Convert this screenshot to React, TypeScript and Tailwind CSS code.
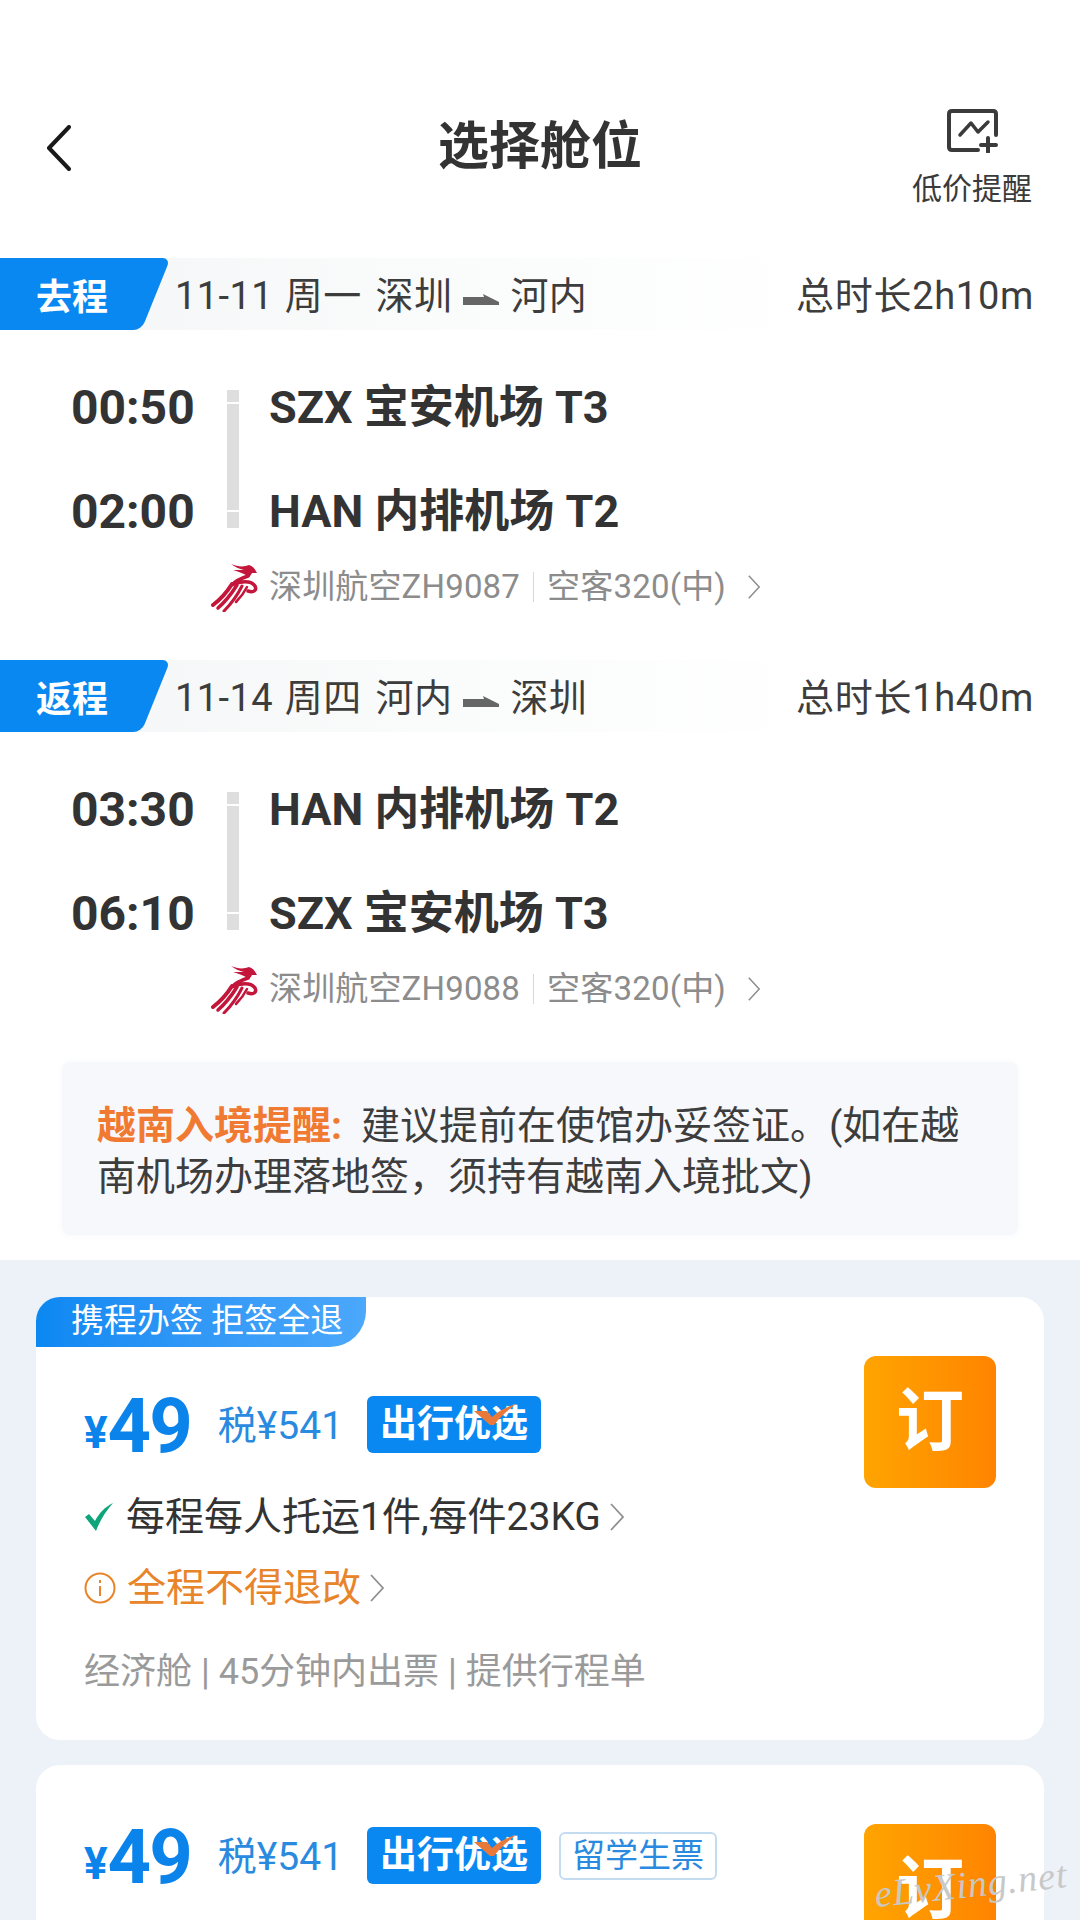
import React from 'react';

const FONT = 'font-["Roboto","Noto_Sans_CJK_SC",sans-serif]';

const ShenzhenLogo = () => (
  <svg viewBox="0 0 50 50" className="w-[50px] h-[50px] shrink-0" fill="none" stroke="#c4163a" strokeLinecap="round">
    <path d="M20 2 C27 5 33 5 38 3 C42 4 44 7 46 11 L41 11 C40 13 39 14 38 15 C32 11 26 9 22 8 C26 8 30 8 33 8 C28 7 24 5 20 2Z" fill="#c4163a" stroke="none" />
    <path d="M37 14 C31 16 25 18 21 23 C29 19 40 18 44 24 C46 28 43 31 37 29" strokeWidth="3.5" />
    <path d="M21 22 C16 30 10 37 2 43" strokeWidth="4" />
    <path d="M26 23 C21 31 15 39 7 46" strokeWidth="3.5" />
    <path d="M31 24 C27 32 21 41 13 49" strokeWidth="3" />
    <path d="M36 25 C33 31 29 36 25 40" strokeWidth="2.5" />
  </svg>
);

const RouteArrow = () => (
  <svg viewBox="0 0 36 11" className="w-[36px] h-[11px] mx-[11px] mt-[6px]" fill="#666">
    <path d="M0 3 H21 L20 0 L36 8 V11 H0 Z" />
  </svg>
);

const AlertIcon = () => (
  <svg viewBox="0 0 51 44" className="w-[51px] h-[44px]" fill="none" stroke="#3a3a3a" strokeWidth="4" strokeLinecap="round" strokeLinejoin="round">
    <path d="M31 41 H5 Q2 41 2 38 V5 Q2 2 5 2 H46 Q49 2 49 5 V26" />
    <path d="M13 26 L24 14 L31 23 L41 13" strokeWidth="3.5" />
    <path d="M41 29 V43 M34 36 H49" />
  </svg>
);

const ThinChevron = ({ className }: { className: string }) => (
  <svg viewBox="0 0 16 30" className={className} fill="none" stroke="#8f8f8f" strokeWidth="1.8">
    <path d="M2 2 L14 15 L2 28" />
  </svg>
);

function SegmentHeader({ tag, date, from, to, total }: { tag: string; date: string; from: string; to: string; total: string }) {
  return (
    <div className="flex items-center h-[72px] bg-gradient-to-r from-[#f4f6f7] via-[#fafbfb] via-40% to-white to-75%">
      <div className="relative h-full w-[174px] overflow-hidden shrink-0">
        <div className="absolute -left-[30px] top-0 h-full w-[186px] bg-[#0a88f2] rounded-[8px] -skew-x-[22deg]" />
        <span className="relative block pl-[36px] leading-[80px] text-[36px] font-bold text-white">{tag}</span>
      </div>
      <div className="flex items-center text-[38px] leading-[50px] mt-[4px] text-[#3d3d3d] ml-[1px] tracking-[0.4px]">
        <span className="[word-spacing:2px]">{date}</span>
        <span className="ml-[14px]">{from}</span>
        <RouteArrow />
        <span>{to}</span>
      </div>
      <span className="ml-auto pr-[46px] mt-[4px] text-[38px] leading-[50px] text-[#3d3d3d] tracking-[0.7px]">{total}</span>
    </div>
  );
}

function FlightInfo({ depTime, depPlace, arrTime, arrPlace, flightNo }: { depTime: string; depPlace: string; arrTime: string; arrPlace: string; flightNo: string }) {
  return (
    <div className="pt-[60px] h-[330px]">
      <div className="flex">
        <div className="w-[227px] pl-[71px] -mt-[11px] flex flex-col gap-[47px] text-[48px] leading-[57px] font-bold text-[#333]">
          <span>{depTime}</span>
          <span>{arrTime}</span>
        </div>
        <div className="w-[12px] h-[138px] flex flex-col">
          <div className="h-[12px] bg-[#dedede]" />
          <div className="h-[2px]" />
          <div className="h-[106px] bg-[#dedede]" />
          <div className="h-[2px]" />
          <div className="h-[16px] bg-[#dedede]" />
        </div>
        <div className="pl-[30px] -mt-[11px] flex flex-col gap-[47px] text-[45px] leading-[57px] font-bold text-[#333]">
          <span>{depPlace}</span>
          <span>{arrPlace}</span>
        </div>
      </div>
      <div className="flex items-center pl-[211px] mt-[22px] h-[50px] text-[33px] text-[#8c8c8c]">
        <ShenzhenLogo />
        <span className="ml-[8px] tracking-[0.15px]">{flightNo}</span>
        <span className="mx-[13px] h-[30px] w-[1px] bg-[#d8d8d8]" />
        <span className="tracking-[0.2px]">空客320(中)</span>
        <ThinChevron className="ml-[20px] w-[16px] h-[26px]" />
      </div>
    </div>
  );
}

function PriceRow({ student }: { student?: boolean }) {
  return (
    <div className="flex items-center">
      <span className="text-[44px] font-bold text-[#0a84ea] leading-none mt-[14px]">¥</span>
      <span className="text-[76px] font-bold text-[#0a84ea] leading-[80px] tracking-[-2px]">49</span>
      <span className="ml-[27px] text-[39px] text-[#2a8ae0]">税¥541</span>
      <div className="relative ml-[24px] mb-[3px] w-[174px] h-[57px] rounded-[6px] bg-[#0a88f2] flex items-center justify-center text-[37px] font-bold text-white">
        出行优选
        <svg viewBox="0 0 44 24" className="absolute left-[107px] top-[7px] w-[44px] h-[24px]">
          <path d="M0 8 L13 8 L18 14 C24 8 34 3 42 1 C34 7 27 13 20 22 L16 22 Z" fill="#e8793a" />
        </svg>
      </div>
      {student && (
        <div className="ml-[18px] mb-[3px] w-[158px] h-[48px] rounded-[6px] border-2 border-[#c4dcf2] flex items-center justify-center text-[33px] text-[#2a8ae0]">
          留学生票
        </div>
      )}
    </div>
  );
}

function BookButton() {
  return (
    <div className="w-[132px] h-[132px] shrink-0 rounded-[12px] bg-gradient-to-r from-[#ffa400] to-[#ff8400] flex items-center justify-center text-[68px] font-bold text-white">
      订
    </div>
  );
}

export default function App() {
  return (
    <div className={`${FONT} relative w-[1080px] h-[1920px] overflow-hidden bg-white`}>
      {/* header */}
      <div className="grid grid-cols-[1fr_auto_1fr] h-[258px]">
        <div className="pl-[46px] pt-[125px]">
          <svg viewBox="0 0 25 46" className="w-[25px] h-[46px]" fill="none" stroke="#1a1a1a" strokeWidth="4" strokeLinecap="round" strokeLinejoin="round">
            <path d="M23 2 L3 23 L23 44" />
          </svg>
        </div>
        <h1 className="pt-[117px] text-[51px] leading-[60px] font-bold text-[#333]">选择舱位</h1>
        <div className="justify-self-end pr-[48px] pt-[109px] flex flex-col items-center gap-[16px]">
          <AlertIcon />
          <span className="text-[30px] leading-[40px] text-[#3a3a3a]">低价提醒</span>
        </div>
      </div>

      <SegmentHeader tag="去程" date="11-11 周一" from="深圳" to="河内" total="总时长2h10m" />
      <FlightInfo depTime="00:50" depPlace="SZX 宝安机场 T3" arrTime="02:00" arrPlace="HAN 内排机场 T2" flightNo="深圳航空ZH9087" />
      <SegmentHeader tag="返程" date="11-14 周四" from="河内" to="深圳" total="总时长1h40m" />
      <FlightInfo depTime="03:30" depPlace="HAN 内排机场 T2" arrTime="06:10" arrPlace="SZX 宝安机场 T3" flightNo="深圳航空ZH9088" />

      {/* visa notice */}
      <div className="mx-[62px] h-[173px] rounded-[8px] bg-[#f7f8fb] px-[35px] pt-[39px] text-[39px] leading-[51px] text-[#3d3d3d] shadow-[0_0_8px_#f7f8fb]">
        <span className="font-bold text-[#f07a32] mr-[19px]">越南入境提醒:</span>建议提前在使馆办妥签证。(如在越南机场办理落地签，须持有越南入境批文)
      </div>

      {/* cabin list */}
      <div className="mt-[25px] bg-[#edf1f8] px-[36px] pt-[37px] h-[660px]">
        <div className="h-[443px] rounded-[24px] bg-white overflow-hidden">
          <div className="h-[50px] w-[330px] rounded-br-[36px] bg-gradient-to-r from-[#0a88f2] to-[#4ba8fb] pl-[35px] text-[33px] leading-[47px] text-white">
            携程办签 拒签全退
          </div>
          <div className="flex justify-between pl-[48px] pr-[48px] pt-[9px]">
            <div className="pt-[30px]">
              <PriceRow />
              <div className="flex items-center mt-[26px] h-[50px] text-[39px] text-[#333]">
                <svg viewBox="0 0 30 30" className="w-[30px] h-[30px]"><path d="M1 15 L5 12 L11 19 C15 11 21 5 29 1 C22 9 16 18 12 29 Z" fill="#0fa57a" /></svg>
                <span className="ml-[12px]">每程每人托运1件,每件23KG</span>
                <ThinChevron className="ml-[8px] w-[16px] h-[30px]" />
              </div>
              <div className="flex items-center mt-[21px] h-[50px] text-[39px] text-[#e8842a]">
                <svg viewBox="0 0 32 32" className="w-[32px] h-[32px]" fill="none" stroke="#e8842a" strokeWidth="2">
                  <circle cx="16" cy="16" r="14.5" />
                  <path d="M16 14 V24 M16 8 V11" />
                </svg>
                <span className="ml-[11px]">全程不得退改</span>
                <ThinChevron className="ml-[8px] w-[16px] h-[30px]" />
              </div>
              <div className="mt-[34px] text-[36px] leading-[50px] text-[#9a9a9a]">经济舱 | 45分钟内出票 | 提供行程单</div>
            </div>
            <BookButton />
          </div>
        </div>

        <div className="mt-[25px] h-[300px] rounded-[24px] bg-white">
          <div className="flex justify-between pl-[48px] pr-[48px] pt-[59px]">
            <div className="-mt-[7px]"><PriceRow student /></div>
            <BookButton />
          </div>
        </div>
      </div>

      {/* watermark */}
      <span className='absolute left-[874px] top-[1862px] -rotate-[6deg] font-["Liberation_Serif",serif] italic text-[38px] leading-[44px] tracking-[1px] text-[#c8c8c8]'>eLvXing.net</span>
    </div>
  );
}
